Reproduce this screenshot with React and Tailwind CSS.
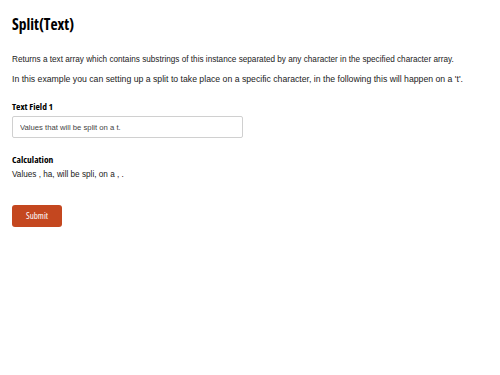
import React from 'react';

function App() {
    return (
        <div className="min-h-[375px] bg-white px-3 pt-[13px] font-['Liberation_Sans',Arial,sans-serif] text-[#222]">
            <h1 className="font-['Open_Sans',sans-serif] font-stretch-condensed text-[15.5px] font-bold leading-[22px] text-black">Split(Text)</h1>
            <p className="mt-[19px] text-[8.2px] leading-[12px]">
                Returns a text array which contains substrings of this instance separated by any character in the specified character array.
            </p>
            <p className="mt-[7px] text-[8.7px] leading-[12px]">
                In this example you can setting up a split to take place on a specific character, in the following this will happen on a 't'.
            </p>
            <div className="mt-[16px] font-['Open_Sans',sans-serif] font-stretch-condensed text-[9.5px] font-bold leading-[12px] text-black">Text Field 1</div>
            <input
                type="text"
                defaultValue="Values that will be split on a t."
                className="mt-[3px] block h-[22px] w-[231px] rounded-[2px] border border-[#d0d0d0] px-[7px] font-['Liberation_Sans',Arial,sans-serif] text-[7.7px] text-[#444] outline-none"
            />
            <div className="mt-[16px] font-['Open_Sans',sans-serif] font-stretch-condensed text-[9.5px] font-bold leading-[12px] text-black">Calculation</div>
            <div className="mt-[3px] text-[8.2px] leading-[12px]">Values , ha, will be spli, on a , .</div>
            <button
                type="button"
                className="mt-[24px] h-[22px] w-[50px] rounded-[3px] bg-[#c4471f] font-['Open_Sans',sans-serif] font-stretch-condensed text-[9px] text-white"
            >
                Submit
            </button>
        </div>
    );
}

export default App;
